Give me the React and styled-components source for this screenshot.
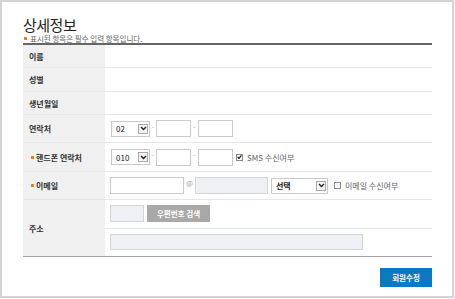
import React from 'react';
import styled, { createGlobalStyle } from 'styled-components';

const GlobalStyle = createGlobalStyle`
  html, body {
    margin: 0;
    padding: 0;
    background: #fff;
  }
  body {
    font-family: 'Noto Sans CJK KR', 'Noto Sans', sans-serif;
    color: #333;
  }
  * {
    box-sizing: border-box;
  }
`;

const Frame = styled.div`
  width: 454px;
  height: 298px;
  border: 2px solid #d4d4d4;
  padding: 0 20px 0 21px;
`;

const Header = styled.div`
  padding-top: 14px;
  height: 41px;
`;

const Title = styled.h2`
  margin: 0;
  font-size: 15px;
  font-weight: 400;
  line-height: 18px;
  color: #222;
  letter-spacing: -0.5px;
`;

const Note = styled.p`
  margin: 0;
  display: flex;
  align-items: center;
  font-size: 7.5px;
  line-height: 9px;
  color: #666;
`;

const Bullet = styled.span`
  display: inline-block;
  width: 3px;
  height: 3px;
  background: #f07b1d;
  margin: 0 ${({ $gap }) => $gap}px 0 1px;
  flex-shrink: 0;
`;

const Table = styled.div`
  border-top: 2px solid #666;
  border-bottom: 1px solid #a3a3a3;
`;

const Row = styled.div`
  display: flex;
  height: ${({ $h }) => $h}px;
  border-bottom: ${({ $last }) => ($last ? 'none' : '1px solid #e6e6e6')};
`;

const Label = styled.div`
  width: 82px;
  flex-shrink: 0;
  background: #f0f0f0;
  display: flex;
  align-items: center;
  padding-left: ${({ $required }) => ($required ? 7 : 6)}px;
  font-size: 8px;
  font-weight: 700;
  color: #333;
`;

const Cell = styled.div`
  flex: 1;
  display: flex;
  align-items: center;
  padding-left: 5px;
  height: ${({ $h }) => ($h ? `${$h}px` : '100%')};
  border-bottom: ${({ $divider }) => ($divider ? '1px solid #e6e6e6' : 'none')};
`;

const Stack = styled.div`
  flex: 1;
  display: flex;
  flex-direction: column;
`;

const SelectBox = styled.div`
  width: ${({ $w }) => $w}px;
  height: 16px;
  margin-left: ${({ $ml }) => $ml || 0}px;
  border: 1px solid #c9c9c9;
  background: #fff;
  display: flex;
  align-items: center;
  justify-content: space-between;
  padding: 0 1px 0 4px;
  font-size: 8px;
  color: #222;
  font-weight: ${({ $bold }) => ($bold ? 700 : 400)};
`;

const ArrowBox = styled.span`
  width: 10px;
  height: 10px;
  border: 1px solid #a8a8a8;
  background: #f4f4f4;
  display: flex;
  align-items: center;
  justify-content: center;
`;

const TextInput = styled.div`
  width: ${({ $w }) => $w}px;
  height: ${({ $h }) => $h || 17}px;
  border: 1px solid ${({ $gray }) => ($gray ? '#d2d6dc' : '#cacaca')};
  background: ${({ $gray }) => ($gray ? '#eef0f4' : '#fff')};
  flex-shrink: 0;
`;

const Dash = styled.span`
  width: ${({ $w }) => $w}px;
  align-self: flex-start;
  margin-top: 8px;
  text-align: center;
  font-size: 7px;
  line-height: 6px;
  color: #aaa;
`;

const At = styled.span`
  width: 11px;
  text-align: center;
  font-size: 7px;
  color: #999;
  align-self: flex-start;
  margin-top: 6px;
`;

const Check = styled.span`
  width: 7px;
  height: 7px;
  margin-left: ${({ $ml }) => $ml}px;
  border: 1px solid #8a8a8a;
  background: #fff;
  display: flex;
  align-items: center;
  justify-content: center;
  flex-shrink: 0;
`;

const CheckText = styled.span`
  margin-left: 4px;
  font-size: 8px;
  color: #666;
`;

const GrayButton = styled.button`
  margin-left: 3px;
  width: 63px;
  height: 17px;
  border: none;
  background: #a9a9a9;
  color: #fff;
  font-family: inherit;
  font-size: 7.5px;
  font-weight: 700;
  padding: 0;
`;

const Footer = styled.div`
  display: flex;
  justify-content: flex-end;
  padding-top: 11px;
`;

const SubmitButton = styled.button`
  width: 52px;
  height: 19px;
  border: none;
  background: #0b78c3;
  color: #fff;
  font-family: inherit;
  font-size: 7.5px;
  font-weight: 700;
  padding: 0;
`;

const Chevron = () => (
  <svg width="7" height="5" viewBox="0 0 7 5">
    <path d="M1 1 L3.5 3.5 L6 1" fill="none" stroke="#222" strokeWidth="1.4" />
  </svg>
);

const Tick = () => (
  <svg width="6" height="6" viewBox="0 0 6 6">
    <path d="M0.8 3 L2.4 4.6 L5.3 1" fill="none" stroke="#111" strokeWidth="1.3" />
  </svg>
);

const Select = ({ value, w, ml, bold }) => (
  <SelectBox $w={w} $ml={ml} $bold={bold}>
    <span>{value}</span>
    <ArrowBox>
      <Chevron />
    </ArrowBox>
  </SelectBox>
);

const PhoneFields = () => (
  <>
    <Dash $w={6}>-</Dash>
    <TextInput $w={35} />
    <Dash $w={7}>-</Dash>
    <TextInput $w={35} />
  </>
);

export default function App() {
  return (
    <>
      <GlobalStyle />
      <Frame>
        <Header>
          <Title>상세정보</Title>
          <Note>
            <Bullet $gap={3} />
            표시된 항목은 필수 입력 항목입니다.
          </Note>
        </Header>

        <Table>
          <Row $h={23}>
            <Label>이름</Label>
            <Cell />
          </Row>
          <Row $h={24}>
            <Label>성별</Label>
            <Cell />
          </Row>
          <Row $h={23}>
            <Label>생년월일</Label>
            <Cell />
          </Row>
          <Row $h={28}>
            <Label>연락처</Label>
            <Cell>
              <Select value="02" w={39} ml={1} />
              <PhoneFields />
            </Cell>
          </Row>
          <Row $h={29}>
            <Label $required>
              <Bullet $gap={2} />
              핸드폰 연락처
            </Label>
            <Cell>
              <Select value="010" w={39} ml={1} />
              <PhoneFields />
              <Check $ml={3}>
                <Tick />
              </Check>
              <CheckText>SMS 수신여부</CheckText>
            </Cell>
          </Row>
          <Row $h={28}>
            <Label $required>
              <Bullet $gap={2} />
              이메일
            </Label>
            <Cell>
              <TextInput $w={74} />
              <At>@</At>
              <TextInput $w={73} $gray />
              <Select value="선택" w={57} ml={3} bold />
              <Check $ml={6} />
              <CheckText>이메일 수신여부</CheckText>
            </Cell>
          </Row>
          <Row $h={56} $last>
            <Label>주소</Label>
            <Stack>
              <Cell $divider $h={29}>
                <TextInput $w={34} $gray />
                <GrayButton>우편번호 검색</GrayButton>
              </Cell>
              <Cell $h={27}>
                <TextInput $w={253} $h={16} $gray />
              </Cell>
            </Stack>
          </Row>
        </Table>

        <Footer>
          <SubmitButton>회원수정</SubmitButton>
        </Footer>
      </Frame>
    </>
  );
}
